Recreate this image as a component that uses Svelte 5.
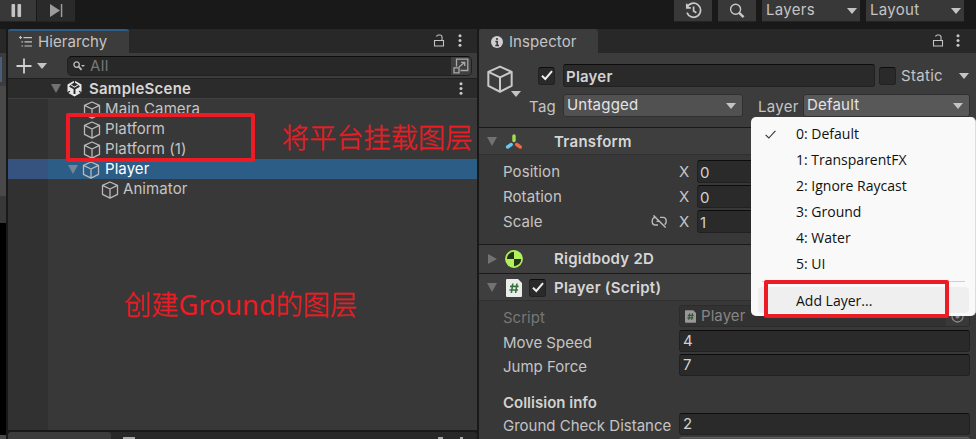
<script>
  const tree = [
    { name: 'Main Camera', indent: 35 },
    { name: 'Platform', indent: 35 },
    { name: 'Platform (1)', indent: 35 },
    { name: 'Player', indent: 35, selected: true },
    { name: 'Animator', indent: 53 }
  ];
  const axes = [
    { label: 'Position', value: '0' },
    { label: 'Rotation', value: '0' },
    { label: 'Scale', value: '1', link: true }
  ];
  const layers = ['0: Default', '1: TransparentFX', '2: Ignore Raycast', '3: Ground', '4: Water', '5: UI'];
</script>

{#snippet cube(size, color)}
  <svg width={size} height={size} viewBox="0 0 18 18" fill="none" stroke={color} stroke-width="1.3" stroke-linejoin="round">
    <path d="M9 1 L16.5 4.4 V13.4 L9 17.2 L1.5 13.4 V4.4 Z M1.5 4.4 L9 8 L16.5 4.4 M9 8 V17.2" />
  </svg>
{/snippet}

{#snippet lock()}
  <svg class="lock" width="12" height="13" viewBox="0 0 12 13" fill="none" stroke="#c4c4c4" stroke-width="1.1">
    <path d="M1.5 6.5 H10.5 V12 H1.5 Z M9 6.5 V3 Q9 1 7 1 H5.5 Q3.8 1 3.6 2.6" />
  </svg>
{/snippet}

{#snippet dots()}
  <svg width="4" height="13" viewBox="0 0 4 13" fill="#c8c8c8">
    <circle cx="2" cy="1.8" r="1.5" /><circle cx="2" cy="6.5" r="1.5" /><circle cx="2" cy="11.2" r="1.5" />
  </svg>
{/snippet}

{#snippet check()}
  <svg width="12" height="11" viewBox="0 0 12 11" fill="none" stroke="#efefef" stroke-width="2"><path d="M1 5.8 L4.3 9 L11 1.2" /></svg>
{/snippet}

{#snippet sheet(w, h)}
  <svg width={w} height={h} viewBox="0 0 16 18">
    <path d="M0 1 Q0 0 1 0 H12 L16 4 V17 Q16 18 15 18 H1 Q0 18 0 17 Z" fill="#ececec" />
    <path d="M6.8 4.5 L5.4 14 M11 4.5 L9.6 14 M4 7.4 H12.6 M3.4 11 H12" stroke="#39703c" stroke-width="1.6" fill="none" />
  </svg>
{/snippet}

<div class="editor">
  <header class="topbar">
    <div class="btn pause"><svg width="12" height="13" viewBox="0 0 12 13" fill="#c4c4c4"><rect x="0.5" width="3.6" height="13" rx="1" /><rect x="6.5" width="3.6" height="13" rx="1" /></svg></div>
    <div class="btn step"><svg width="13" height="13" viewBox="0 0 13 13" fill="#9c9c9c"><path d="M0 0 L10 6.5 L0 13 Z" /><rect x="10.8" width="1.5" height="13" /></svg></div>
    <div class="spacer"></div>
    <div class="btn square">
      <svg width="17" height="17" viewBox="0 0 17 17" fill="none" stroke="#c8c8c8" stroke-width="1.7"><path d="M2.2 5.4 A7 7 0 1 1 2 10.6 M1.8 1.8 V5.8 H5.8 M8.6 4.5 V9 L11.4 10.8" /></svg>
    </div>
    <div class="btn square">
      <svg width="16" height="16" viewBox="0 0 16 16" fill="none" stroke="#c8c8c8"><circle cx="6.6" cy="6.2" r="5" stroke-width="1.4" /><path d="M10.2 9.8 L14.6 14.2" stroke-width="2.4" /></svg>
    </div>
    <div class="btn drop"><span>Layers</span><i class="caret"></i></div>
    <div class="btn drop"><span>Layout</span><i class="caret"></i></div>
  </header>

  <main class="panels">
    <aside class="sliver"><div class="s-tab"></div><div class="s-tool"><b></b></div><div class="s-gray"></div><div class="s-mid"></div><div class="s-black"></div><div class="s-end"></div></aside>

    <section class="left">
      <div class="hierarchy">
        <div class="tabs">
          <div class="tab active">
            <svg width="14" height="12" viewBox="0 0 14 12" stroke="#c4c4c4" stroke-width="1.2" fill="none"><path d="M0 1.5 H3 M1.5 0 V3 M4.5 1.6 H13 M5.5 5.8 H13 M5.5 10 H13 M2.5 5.8 H4 M2.5 10 H4" /></svg>
            <span>Hierarchy</span>
          </div>
          <div class="spacer"></div>
          {@render lock()}
          <div class="menu-dots">{@render dots()}</div>
        </div>
        <div class="tools">
          <svg class="plus" width="16" height="16" viewBox="0 0 16 16" stroke="#d0d0d0" stroke-width="1.8"><path d="M8 0.5 V15.5 M0.5 8 H15.5" /></svg>
          <i class="caret"></i>
          <div class="search">
            <svg width="12" height="10" viewBox="0 0 12 10" fill="none" stroke="#bdbdbd" stroke-width="1.3"><circle cx="3.6" cy="3.6" r="2.7" /><path d="M5.6 5.6 L8.6 8.8" stroke-width="1.8" /><path d="M8 4 H12 L10 6 Z" fill="#bdbdbd" stroke="none" /></svg>
            <span>All</span>
            <div class="pop">
              <svg width="16" height="16" viewBox="0 0 16 16" fill="none" stroke="#aaa" stroke-width="1.3"><path d="M3.5 8.5 V1.2 H14.8 V12.5 H7.5 M1 9.8 H6 V14.8 H1 Z M6 9 L11.5 4.5 M8 4.3 H11.7 V8" /></svg>
            </div>
          </div>
        </div>
        <div class="scene">
          <i class="fold"></i>
          <svg width="17" height="17" viewBox="0 0 17 17"><path d="M8.5 0.5 L15.5 4.4 V12.6 L8.5 16.5 L1.5 12.6 V4.4 Z" fill="#e8e8e8" /><path d="M8.5 8.7 L3.7 5.9 M8.5 8.7 L13.3 5.9 M8.5 8.7 V14" stroke="#2b2b2b" stroke-width="1.9" /><path d="M6.2 4.5 L8.5 3.2 L10.8 4.5 L8.5 5.9 Z M8.5 0 V3.4 M1 13 L4 11.2 M16 13 L13 11.2" fill="#2b2b2b" stroke="#2b2b2b" stroke-width="1.2" /></svg>
          <b>SampleScene</b>
          <div class="spacer"></div>
          <div class="scene-dots">{@render dots()}</div>
        </div>
        <div class="tree">
          {#each tree as item}
            <div class="row" class:selected={item.selected}>
              <div class="gutter"></div>
              <div class="node" style:padding-left="{item.indent - (item.selected ? 15 : 0)}px">
                {#if item.selected}<i class="fold"></i>{/if}
                {@render cube(18, '#b9b9b9')}
                <span>{item.name}</span>
              </div>
            </div>
          {/each}
          <div class="row rest"><div class="gutter"></div></div>
        </div>
      </div>
      <div class="project"><div class="project-tab"></div><i class="dash"></i><div class="spacer"></div><i class="nub"></i><i class="nub small"></i></div>
    </section>

    <section class="inspector">
      <div class="tabs">
        <div class="tab">
          <svg width="12" height="12" viewBox="0 0 12 12"><circle cx="6" cy="6" r="6" fill="#cfcfcf" /><path d="M6 2 V4 M4.4 5.4 H6.2 V9.5 M4.3 9.5 H8" stroke="#333" stroke-width="1.5" fill="none" /></svg>
          <span>Inspector</span>
        </div>
        <div class="spacer"></div>
        {@render lock()}
        <div class="menu-dots">{@render dots()}</div>
      </div>

      <div class="object">
        <div class="big">{@render cube(28, '#c8c8c8')}<i class="caret"></i></div>
        <div class="object-rows">
          <div class="line first">
            <div class="box">{@render check()}</div>
            <div class="field name">Player</div>
            <div class="box static-box"></div>
            <span class="static">Static</span>
            <i class="caret"></i>
          </div>
          <div class="line second">
            <span class="tag">Tag</span>
            <div class="select s1"><span>Untagged</span><i class="caret"></i></div>
            <span class="layer">Layer</span>
            <div class="select s2"><span>Default</span><i class="caret"></i></div>
          </div>
        </div>
      </div>

      <div class="head transform">
        <i class="fold"></i>
        <svg width="18" height="16" viewBox="0 0 18 16" stroke-linecap="round" stroke-width="3.4"><path d="M9 2 V6.5" stroke="#a4dd50" /><path d="M6.2 10.5 L2.6 13" stroke="#6cc5f5" /><path d="M11.6 10.5 L15.3 13" stroke="#f4683c" /></svg>
        <b>Transform</b>
      </div>
      <div class="axes">
        {#each axes as a}
          <div class="axis">
            <span class="lbl">{a.label}</span>
            <div class="link">
              {#if a.link}<svg width="17" height="14" viewBox="0 0 17 14" fill="none" stroke="#bcbcbc" stroke-width="1.4"><path d="M5.5 2.4 H4.5 Q1.2 2.4 1.2 6.2 Q1.2 10 4.5 10 H7 M5.5 6.4 H8 M9 2.4 H12 Q15.2 2.4 15.2 6.2 Q15.2 8.4 13.6 9.6 M2.5 0.4 L14.6 12.4" /></svg>{/if}
            </div>
            <span class="x">X</span>
            <div class="field">{a.value}</div>
          </div>
        {/each}
      </div>

      <div class="head rigid">
        <i class="fold closed"></i>
        <svg width="18" height="18" viewBox="0 0 18 18"><circle cx="9" cy="9" r="8.2" fill="#b2f05c" stroke="#b2f05c" stroke-width="1.4" /><path d="M9 9 V1.8 A7.2 7.2 0 0 0 1.8 9 Z M9 9 V16.2 A7.2 7.2 0 0 0 16.2 9 Z" fill="#26331a" /></svg>
        <b>Rigidbody 2D</b>
      </div>
      <div class="head script">
        <i class="fold"></i>
        {@render sheet(16, 18)}
        <div class="box">{@render check()}</div>
        <b>Player (Script)</b>
      </div>
      <div class="props">
        <div class="prop dim"><span>Script</span><div class="field">{@render sheet(11, 13)}<em>Player</em><div class="pick"><svg width="13" height="13" viewBox="0 0 13 13"><circle cx="6.5" cy="6.5" r="5.5" fill="none" stroke="#8a8a8a" stroke-width="1.3" /><circle cx="6.5" cy="6.5" r="2" fill="#8a8a8a" /></svg></div></div></div>
        <div class="prop"><span>Move Speed</span><div class="field">4</div></div>
        <div class="prop"><span>Jump Force</span><div class="field">7</div></div>
        <div class="section">Collision info</div>
        <div class="prop"><span>Ground Check Distance</span><div class="field">2</div></div>
        <div class="prop"><span></span><div class="field next"></div></div>
      </div>
    </section>
  </main>

  <div class="popup">
    {#each layers as l, i}
      <div class="option"><div class="mark">{#if i === 0}<svg width="11" height="9" viewBox="0 0 11 9" fill="none" stroke="#333" stroke-width="1.1"><path d="M0.6 4.8 L3.8 8 L10.4 0.8" /></svg>{/if}</div><span>{l}</span></div>
    {/each}
    <hr />
    <div class="option add"><span>Add Layer...</span></div>
  </div>

  <div class="mark-box one"></div>
  <div class="mark-box two"></div>
  <div class="note n1">将平台挂载图层</div>
  <div class="note n2">创建<span>Ground</span>的图层</div>
</div>

<style>
  :global(body) { margin: 0; background: #191919; overflow: hidden; }
  .editor { position: relative; width: 976px; height: 439px; overflow: hidden; background: #191919; color: #c4c4c4; font: 15px/18px Inter, sans-serif; letter-spacing: 0.08px; display: flex; flex-direction: column; white-space: nowrap; }
  .editor :global(*) { box-sizing: border-box; }
  svg { flex: none; display: block; }
  b { font-weight: 600; color: #d6d6d6; letter-spacing: 0.25px; }
  .spacer { flex: 1; }
  .caret { flex: none; width: 0; height: 0; border: 5px solid transparent; border-top: 6px solid #c4c4c4; border-bottom: 0; }
  .fold { flex: none; width: 0; height: 0; border: 5.5px solid transparent; border-top: 9px solid #727272; border-bottom: 0; }
  .fold.closed { border: 5.5px solid transparent; border-left: 9px solid #727272; border-right: 0; }

  .topbar { height: 29px; display: flex; align-items: flex-start; padding-right: 12px; gap: 6px; }
  .btn { height: 22px; background: #383838; border-bottom: 1px solid #242424; display: flex; align-items: center; justify-content: center; flex: none; }
  .pause { width: 36px; padding-right: 3px; }
  .step { width: 38px; margin-left: -5px; background: #2a2a2a; }
  .square { width: 38px; }
  .drop { width: 98px; justify-content: space-between; padding: 0 3px 0 4px; }
  .drop span { padding-bottom: 2px; letter-spacing: 0.3px; }

  .panels { flex: 1; min-height: 0; display: flex; }
  .sliver { width: 6px; margin-right: 2px; display: flex; flex-direction: column; flex: none; }
  .s-tab { height: 24px; background: #282828; }
  .s-tool { height: 33px; background: #3c3c3c; padding-top: 4px; }
  .s-tool b { display: block; width: 2px; height: 25px; background: #46607c; }
  .s-gray { height: 110px; background: #494949; }
  .s-mid { height: 27px; background: #383838; }
  .s-black { height: 212px; background: #000; }
  .s-end { flex: 1; background: #494949; }

  .left { width: 469px; margin-right: 2px; flex: none; display: flex; flex-direction: column; }
  .hierarchy { height: 401px; background: #383838; display: flex; flex-direction: column; }
  .tabs { height: 24px; flex: none; background: #282828; display: flex; align-items: center; }
  .tab { height: 24px; width: 119px; background: #3c3c3c; border-radius: 3px 3px 0 0; display: flex; align-items: center; padding: 2px 0 0 12px; }
  .tab svg { margin-right: 6px; }
  .tab.active { width: 121px; border-top: 2px solid #2c5d87; padding: 0 0 0 11px; }
  .tab.active svg { margin-right: 5px; }
  .lock { margin: 0 12px 1px 0; }
  .menu-dots { width: 20px; padding-bottom: 2px; }
  .left .menu-dots { padding-left: 1px; }
  .tools { height: 25px; flex: none; background: #3c3c3c; display: flex; align-items: center; padding: 1px 5px 0 8px; }
  .plus { margin-right: 5px; }
  .search { margin-left: 20px; height: 20px; flex: 1; background: #282828; border: 1px solid #202020; border-top-color: #0d0d0d; border-radius: 5px; display: flex; align-items: center; padding-left: 5px; color: #777; overflow: hidden; }
  .search span { margin-left: 5px; flex: 1; letter-spacing: 0.4px; }
  .pop { width: 20px; height: 19px; background: #404040; display: flex; align-items: center; justify-content: center; }
  .scene { height: 21px; flex: none; background: #2b2b2b; border-top: 1px solid #202020; border-bottom: 1px solid #404040; display: flex; align-items: center; padding-left: 43px; }
  .scene svg { margin: 0 6px 0 5px; }
  .scene-dots { width: 18px; }
  .scene-dots svg { margin: 0; }
  .tree { flex: 1; display: flex; flex-direction: column; }
  .row { height: 20px; display: flex; }
  .row.rest { flex: 1; }
  .gutter { width: 40px; background: #313131; }
  .selected { background: #2c5d87; color: #fff; }
  .selected .gutter { background: #36537f; }
  .node { display: flex; align-items: center; }
  .node .fold { margin-right: 4px; border-top-color: #718797; }
  .node svg { margin-right: 4px; position: relative; top: 1px; }
  .selected svg { margin-right: 5px; }
  .project { margin-top: 2px; height: 7px; background: #282828; display: flex; border-radius: 3px 3px 0 0; overflow: hidden; }
  .project-tab { width: 103px; background: #3c3c3c; border-radius: 3px 3px 0 0; }
  .dash { width: 12px; height: 3px; background: #aaa; margin: 5px 0 0 12px; }
  .nub { width: 5px; height: 2px; background: #aaa; margin: 5px 17px 0 0; }
  .nub.small { width: 3px; margin-right: 14px; }

  .inspector { flex: 1; min-width: 0; background: #383838; display: flex; flex-direction: column; overflow: hidden; }
  .object { height: 74px; flex: none; background: #3c3c3c; display: flex; padding: 11px 6px 0 7px; }
  .big { width: 44px; display: flex; align-items: flex-end; height: 34px; }
  .big svg { align-self: flex-start; margin-top: 1px; }
  .big .caret { margin: 0 0 1px -3px; }
  .object-rows { flex: 1; }
  .line { height: 23px; display: flex; align-items: center; }
  .first { margin-left: 9px; }
  .box { width: 17px; height: 18px; background: #2a2a2a; border: 1px solid #212121; border-top-color: #0d0d0d; border-radius: 3px; display: flex; align-items: center; justify-content: center; flex: none; }
  .field { height: 23px; background: #2a2a2a; border: 1px solid #212121; border-top-color: #0d0d0d; border-radius: 3px; display: flex; align-items: center; padding-left: 3px; color: #d2d2d2; overflow: hidden; }
  .name { width: 312px; margin: 0 4px 0 8px; font-weight: 600; padding: 2px 0 0 2px; letter-spacing: 0.2px; }
  .static { margin: 0 16px 0 5px; letter-spacing: 0.3px; }
  .second { margin-top: 7px; height: 23px; }
  .tag { width: 34px; padding-top: 2px; letter-spacing: 0.3px; }
  .select { height: 23px; background: #515151; border: 1px solid #303030; border-radius: 3px; display: flex; align-items: center; justify-content: space-between; padding: 0 6px 0 3px; color: #e4e4e4; letter-spacing: 0.2px; }
  .select span { padding-bottom: 1px; }
  .s1 { width: 180px; }
  .layer { width: 45px; margin-left: 15px; padding-top: 2px; letter-spacing: 0.3px; }
  .s2 { width: 167px; background: #585858; }

  .head { flex: none; background: #3e3e3e; border-top: 1px solid #1a1a1a; display: flex; align-items: center; padding-left: 8px; }
  .head svg { margin-left: 8px; }
  .transform { height: 28px; border-bottom: 1px solid #303030; padding-top: 1px; }
  .transform b { margin-left: 31px; letter-spacing: 0.3px; }
  .rigid { height: 29px; padding-left: 9px; }
  .rigid b { margin-left: 31px; }
  .script { height: 28px; border-bottom: 1px solid #303030; padding-top: 1px; }
  .script svg { margin-left: 9px; }
  .script .box { margin: 0 8px 0 7px; }
  .script .box svg { margin: 0; }
  .axes { height: 89px; flex: none; padding-top: 5px; }
  .axis { height: 25px; display: flex; align-items: center; padding: 0 0 2px 24px; }
  .axis .lbl { width: 148px; }
  .link { width: 28px; }
  .x { width: 18px; }
  .axis .field { flex: 1; padding: 2px 0 0 2px; }
  .props { padding-top: 4px; }
  .prop { height: 24.5px; display: flex; padding: 0 6px 0 24px; align-items: flex-start; }
  .prop > span { width: 176px; flex: none; padding-top: 4px; letter-spacing: 0; }
  .prop .field { flex: 1; height: 22px; }
  .dim { color: #777; }
  .dim .field { background: #323232; border-color: #2c2c2c; color: #858585; padding-left: 5px; }
  .dim .field > svg { opacity: 0.55; }
  .dim em { font-style: normal; flex: 1; margin-left: 5px; }
  .pick { width: 23px; height: 20px; background: #393939; display: flex; align-items: center; justify-content: center; }
  .section { height: 34px; padding: 15px 0 0 24px; font-weight: 600; color: #d2d2d2; letter-spacing: 0; }
  .next { background: #515151; border-color: #606060; }

  .popup { position: absolute; left: 751px; top: 117px; width: 225px; height: 199px; border-radius: 5px; background: #f9f9f9; border-right: 1px solid #ddd; color: #111; padding-top: 4px; font: 14px/20px "Open Sans", "Noto Sans", sans-serif; letter-spacing: 0; }
  .option { height: 26px; display: flex; align-items: center; }
  .mark { width: 31px; margin-left: 14px; }
  .popup hr { border: 0; border-top: 1px solid #d0d0d0; margin: 4px 10px 5px 11px; }
  .add { background: #efefef; border-radius: 4px; margin: 0 6px 0 7px; padding: 1px 0 0 38px; }
  .mark-box { position: absolute; border: 4px solid #ed1c24; border-radius: 2px; }
  .one { left: 66px; top: 113px; width: 189px; height: 49px; }
  .two { left: 764px; top: 280px; width: 185px; height: 38px; }
  .note { position: absolute; color: #ed1c24; font: 300 27.2px/40px "Noto Sans CJK SC", sans-serif; letter-spacing: 0; -webkit-text-stroke: 0.35px #ed1c24; }
  .note span { font-family: "Noto Sans", sans-serif; font-weight: 400; font-size: 27.2px; -webkit-text-stroke: 0; }
  .n1 { left: 282px; top: 116px; }
  .n2 { left: 124px; top: 283px; }
</style>
